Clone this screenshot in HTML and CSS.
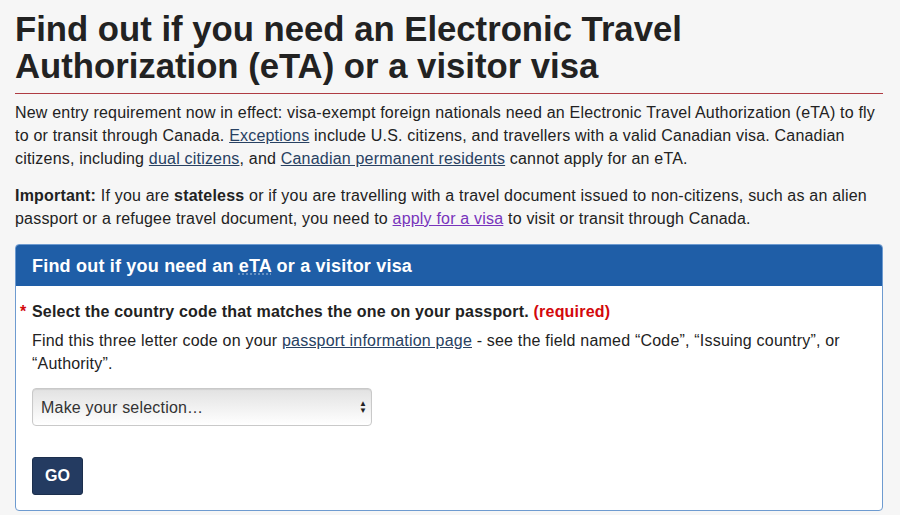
FILE: index.html
```html
<!DOCTYPE html>
<html lang="en">
<head>
    <meta charset="UTF-8">
    <meta name="viewport" content="width=device-width, initial-scale=1.0">
    <title>Find out if you need an eTA or a visitor visa</title>
    <link rel="stylesheet" href="styles.css">
</head>
<body>

    <!-- page title -->
    <h1 class="page-title">Find out if you need an Electronic Travel Authorization (eTA) or a visitor visa</h1>

    <p class="intro">New entry requirement now in effect: visa-exempt foreign nationals need an Electronic Travel Authorization (eTA) to fly to or transit through Canada. <a href="#">Exceptions</a> include U.S. citizens, and travellers with a valid Canadian visa. Canadian citizens, including <a href="#">dual citizens</a>, and <a href="#">Canadian permanent residents</a> cannot apply for an eTA.</p>

    <p class="intro"><strong>Important:</strong> If you are <strong>stateless</strong> or if you are travelling with a travel document issued to non-citizens, such as an alien passport or a refugee travel document, you need to <a href="#" class="visited">apply for a visa</a> to visit or transit through Canada.</p>

    <!-- eTA questionnaire -->
    <section class="panel">
        <h2 class="panel-heading">Find out if you need an <abbr title="Electronic Travel Authorization">eTA</abbr> or a visitor visa</h2>

        <div class="panel-body">
            <label for="country" class="required"><span class="star">*</span> Select the country code that matches the one on your passport. <strong class="req">(required)</strong></label>
            <p class="hint">Find this three letter code on your <a href="#">passport information page</a> - see the field named “Code”, “Issuing country”, or “Authority”.</p>

            <div class="select-wrap">
                <select id="country">
                    <option>Make your selection…</option>
                </select>
                <span class="arrows">▲<br>▼</span>
            </div>

            <button class="go">GO</button>
        </div>
    </section>

</body>
</html>
```

FILE: styles.css
```css
body {
    margin: 0;
    padding: 0 17px 0 15px;
    background-color: #f6f6f6;
    color: #222;
    font-family: "Liberation Sans", Arial, sans-serif;
    font-size: 16px;
    line-height: 23px;
    letter-spacing: 0.2px;
}

a {
    color: #284162;
    text-decoration: underline;
}

a.visited {
    color: #7834bc;
}

.page-title {
    margin: 11px 0 0;
    padding-bottom: 8px;
    border-bottom: 1px solid #af3c43;
    font-size: 34.7px;
    line-height: 37px;
    font-weight: bold;
    letter-spacing: 0;
    color: #222;
}

.intro {
    margin: 7px 0 14px;
}

.intro + .intro {
    margin-top: 0;
}

.panel {
    margin-top: 12px;
    border: 1px solid #6e9bd0;
    border-radius: 4px;
    background: #fff;
    overflow: hidden;
}

.panel-heading {
    margin: 0;
    padding: 10px 16px 8px;
    background-color: #1f5ea7;
    color: #fff;
    font-size: 18px;
    line-height: 23px;
}

.panel-heading abbr {
    text-decoration: underline dotted rgba(255, 255, 255, 0.35);
    text-underline-offset: 2px;
}

.panel-body {
    padding: 14px 16px 15px;
}

.required {
    display: block;
    position: relative;
    font-weight: bold;
}

.star {
    position: absolute;
    left: -12px;
    top: 0;
    color: #d3080c;
}

.req {
    color: #d3080c;
}

.hint {
    margin: 6px 0 0;
}

.select-wrap {
    position: relative;
    width: 340px;
    margin-top: 13px;
}

.select-wrap select {
    display: block;
    width: 340px;
    height: 38px;
    padding: 0 8px;
    border: 1px solid #c9c9c9;
    border-radius: 4px;
    background: linear-gradient(#e2e2e2, #ffffff);
    box-shadow: inset 0 1px 1px rgba(0, 0, 0, 0.08);
    color: #333;
    font-family: "Liberation Sans", Arial, sans-serif;
    font-size: 16px;
    letter-spacing: 0.2px;
    -webkit-appearance: none;
    appearance: none;
}

.arrows {
    position: absolute;
    right: 5px;
    top: 12px;
    font-size: 8px;
    line-height: 7px;
    color: #222;
}

.go {
    display: block;
    margin-top: 31px;
    padding: 8px 12px 9px;
    border: 1px solid #1c2f4d;
    border-radius: 3px;
    background-color: #243b61;
    color: #fff;
    font-family: "Liberation Sans", Arial, sans-serif;
    font-size: 16px;
    line-height: 19px;
    font-weight: bold;
}
```
